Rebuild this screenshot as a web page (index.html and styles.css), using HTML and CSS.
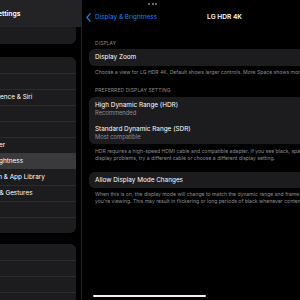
FILE: index.html
```html
<!DOCTYPE html>
<html lang="en">
<head>
    <meta charset="UTF-8">
    <meta name="viewport" content="width=device-width, initial-scale=1.0">
    <title>Display &amp; Brightness</title>
    <link rel="stylesheet" href="styles.css">
</head>
<body>
    <div class="screen">
        <aside class="sidebar">
            <div class="sidebar-inner">
                <div class="sidebar-header">Settings</div>
                <div class="side-card account"></div>

                <ul class="side-card">
                    <li>General</li>
                    <li>Accessibility</li>
                    <li>Apple Intelligence &amp; Siri</li>
                    <li>Apple Pencil</li>
                    <li>Camera</li>
                    <li>Control Center</li>
                    <li class="selected">Display &amp; Brightness</li>
                    <li>Home Screen &amp; App Library</li>
                    <li>Multitasking &amp; Gestures</li>
                    <li>Search</li>
                    <li>Wallpaper</li>
                </ul>

                <ul class="side-card">
                    <li>Sounds</li>
                    <li>Focus</li>
                    <li>Screen Time</li>
                    <li>Alerts</li>
                </ul>
            </div>
        </aside>

        <main class="detail">
            <div class="nav">
                <a class="back">
                    <svg width="5" height="9" viewBox="0 0 5 9">
                        <path d="M4.2 0.7 L0.9 4.5 L4.2 8.3" fill="none" stroke="#0a84ff" stroke-width="1.2" stroke-linecap="round" stroke-linejoin="round"/>
                    </svg>
                    <span>Display &amp; Brightness</span>
                </a>
                <div class="nav-title">LG HDR 4K</div>
                <div></div>
            </div>

            <div class="section-title first">Display</div>
            <div class="card">
                <div class="row single">Display Zoom</div>
            </div>
            <p class="footer">Choose a view for LG HDR 4K. Default shows larger controls. More Space shows more content.</p>

            <div class="section-title">Preferred Display Setting</div>
            <div class="card">
                <div class="row double">
                    <div class="row-title">High Dynamic Range (HDR)</div>
                    <div class="row-sub">Recommended</div>
                </div>
                <div class="row double">
                    <div class="row-title">Standard Dynamic Range (SDR)</div>
                    <div class="row-sub">Most compatible</div>
                </div>
            </div>
            <p class="footer">HDR requires a high-speed HDMI cable and compatible adapter. If you see black, sparkles or other<br>display problems, try a different cable or choose a different display setting.</p>

            <div class="card spaced">
                <div class="row single">Allow Display Mode Changes</div>
            </div>
            <p class="footer">When this is on, the display mode will change to match the dynamic range and frame rate of what<br>you're viewing. This may result in flickering or long periods of black whenever content changes.</p>
        </main>

        <div class="multitask-dots"><span></span><span></span><span></span></div>
        <div class="home-indicator"></div>
    </div>
</body>
</html>
```

FILE: styles.css
```css
* {
    margin: 0;
    padding: 0;
    box-sizing: border-box;
}

body {
    font-family: Inter, 'Noto Sans', sans-serif;
    background: #000;
    color: #fff;
}

.screen {
    position: relative;
    display: flex;
    width: 300px;
    height: 300px;
    overflow: hidden;
    background: #000;
}

/* sidebar, mostly scrolled off to the left */
.sidebar {
    width: 82px;
    flex-shrink: 0;
    overflow: hidden;
    border-right: 1px solid #232325;
}

.sidebar-inner {
    width: 141px;
    margin-left: -60px;
    padding-right: 5px;
}

.sidebar-header {
    height: 27px;
    margin-right: -5px;
    padding-right: 7px;
    background: #232325;
    font-size: 6.8px;
    font-weight: 600;
    line-height: 27px;
    text-align: center;
}

.side-card {
    list-style: none;
    margin-left: 8px;
    background: #1c1c1e;
    border-radius: 6px;
    overflow: hidden;
}

.side-card.account {
    height: 17px;
    border-radius: 0 0 6px 6px;
}

.side-card + .side-card {
    margin-top: 13px;
}

.side-card + .side-card + .side-card {
    margin-top: 11px;
}

.side-card li {
    height: 16px;
    padding-left: 13px;
    font-size: 6.4px;
    line-height: 16px;
    white-space: nowrap;
}

.side-card li + li {
    box-shadow: inset 0 1px 0 #2c2c2e;
}

.side-card li.selected,
.side-card li.selected + li {
    box-shadow: none;
}

.side-card li.selected {
    background: #3a3a3c;
}

/* detail pane */
.detail {
    width: 285px;
    flex-shrink: 0;
    padding: 0 7px;
}

.nav {
    display: grid;
    grid-template-columns: 1fr auto 1fr;
    align-items: center;
    height: 34px;
}

.back {
    display: flex;
    align-items: center;
    gap: 4px;
    margin-left: -3px;
    color: #0a84ff;
    font-size: 6.4px;
    white-space: nowrap;
}

.nav-title {
    font-size: 6.6px;
    font-weight: 600;
}

.section-title {
    margin-top: 11px;
    margin-bottom: 4px;
    padding-left: 6px;
    color: #8d8d93;
    font-size: 4.9px;
    line-height: 6px;
    letter-spacing: 0.15px;
    text-transform: uppercase;
}

.section-title.first {
    margin-top: 6px;
    margin-bottom: 3px;
}

.card {
    background: #1c1c1e;
    border-radius: 6px;
    overflow: hidden;
}

.card.spaced {
    margin-top: 10px;
}

.row {
    padding-left: 6px;
    white-space: nowrap;
}

.row.single {
    height: 17px;
    font-size: 6.4px;
    line-height: 17px;
}

.card.spaced .row.single {
    height: 16px;
    line-height: 16px;
}

.row.double {
    height: 24px;
    padding-top: 4px;
}

.row.double + .row.double {
    height: 23px;
    box-shadow: inset 6px 1px 0 #1c1c1e, inset 0 1px 0 #38383a;
}

.row-title {
    font-size: 6.4px;
    line-height: 8px;
}

.row-sub {
    color: #8d8d93;
    font-size: 5.8px;
    line-height: 8px;
}

.footer {
    padding: 3px 0 0 6px;
    color: #8d8d93;
    font-size: 5.1px;
    line-height: 7px;
    white-space: nowrap;
}

.card + .footer + .section-title + .card + .footer {
    padding-top: 4px;
}

/* system overlays */
.multitask-dots {
    position: absolute;
    top: 3px;
    left: 148px;
    display: flex;
    gap: 1.5px;
}

.multitask-dots span {
    width: 2px;
    height: 2px;
    border-radius: 50%;
    background: #8e8e93;
}

.home-indicator {
    position: absolute;
    top: 295px;
    left: 93px;
    width: 113px;
    height: 2px;
    border-radius: 1px;
    background: #f2f2f2;
}
```
